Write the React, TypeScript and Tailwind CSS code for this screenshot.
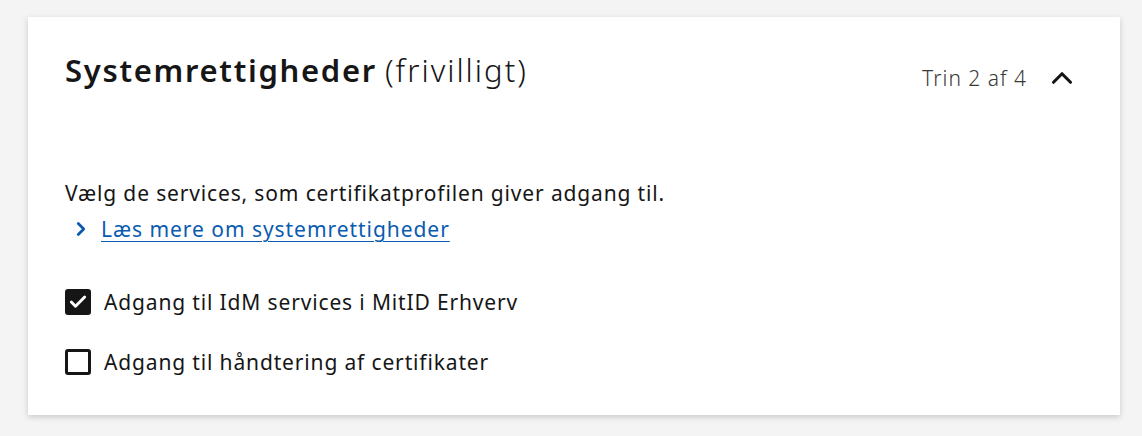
import { Check, ChevronRight, ChevronUp } from 'lucide-react';

const options = [
  { label: 'Adgang til IdM services i MitID Erhverv', checked: true },
  { label: 'Adgang til håndtering af certifikater', checked: false },
];

export default function App() {
  return (
    <div className="h-[436px] w-[1142px] bg-[#f4f4f4] pl-[28px] pt-[17px] font-['Noto_Sans',sans-serif] text-[#161616]">
      <section className="h-[398px] w-[1092px] bg-white pl-[37px] pr-[41px] pt-[33px] shadow-[0_2px_6px_rgba(0,0,0,0.18)]">
        <div className="flex items-start justify-between">
          <h2 className="text-[31px] leading-[40px]">
            <span className="font-semibold tracking-[1.7px]">Systemrettigheder</span>{' '}
            <span className="font-light tracking-[2px]">(frivilligt)</span>
          </h2>
          <div className="mt-[11px] flex items-center gap-[18px]">
            <span className="text-[21px] font-light leading-[30px] tracking-[1px] text-[#393939]">Trin 2 af 4</span>
            <ChevronUp className="h-[34px] w-[34px]" strokeWidth={2.2} />
          </div>
        </div>

        <p className="mt-[83px] text-[21px] leading-[30px] tracking-[0.85px]">
          Vælg de services, som certifikatprofilen giver adgang til.
        </p>
        <a
          href="#"
          className="mt-[6px] flex items-center gap-[9px] pl-[5px] text-[21px] leading-[30px] tracking-[0.95px] text-[#0a5bb0]"
        >
          <ChevronRight className="h-[22px] w-[22px]" strokeWidth={3} />
          <span className="underline decoration-1 underline-offset-[4px]">Læs mere om systemrettigheder</span>
        </a>

        <ul className="mt-[43px] flex flex-col gap-[30px]">
          {options.map((o) => (
            <li key={o.label} className="flex items-center gap-[13px] text-[21px] leading-[30px] tracking-[0.85px]">
              {o.checked ? (
                <span className="flex h-[26px] w-[26px] items-center justify-center rounded-[3px] bg-[#161616] text-white">
                  <Check className="h-[20px] w-[20px]" strokeWidth={3.5} />
                </span>
              ) : (
                <span className="h-[26px] w-[26px] rounded-[3px] border-[3px] border-[#161616]" />
              )}
              {o.label}
            </li>
          ))}
        </ul>
      </section>
    </div>
  );
}
